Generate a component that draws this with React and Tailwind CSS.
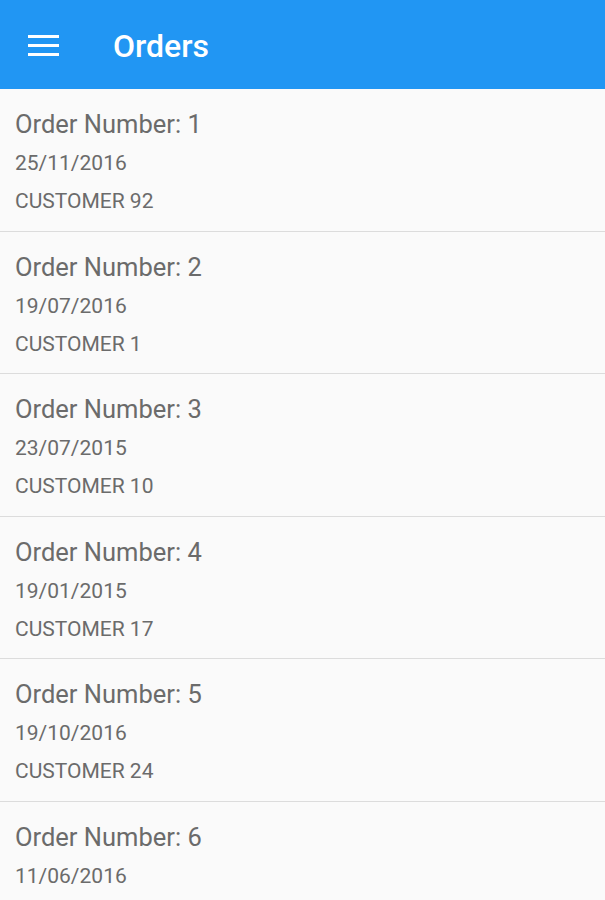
import React from "react";

const orders = [
  { n: 1, date: "25/11/2016", customer: "CUSTOMER 92" },
  { n: 2, date: "19/07/2016", customer: "CUSTOMER 1" },
  { n: 3, date: "23/07/2015", customer: "CUSTOMER 10" },
  { n: 4, date: "19/01/2015", customer: "CUSTOMER 17" },
  { n: 5, date: "19/10/2016", customer: "CUSTOMER 24" },
  { n: 6, date: "11/06/2016", customer: "CUSTOMER 31" },
];

export default function App() {
  return (
    <div className="w-[605px] h-[900px] overflow-hidden bg-[#fafafa]" style={{ fontFamily: "Roboto, 'Noto Sans', sans-serif" }}>
      <header className="h-[89px] bg-[#2196f3] flex items-center">
        <div className="w-[113px] pl-[28px] flex items-center">
          <svg width="31" height="22" viewBox="0 0 31 22">
            <rect x="0" y="1" width="31" height="3" fill="#fff" />
            <rect x="0" y="10" width="31" height="3" fill="#fff" />
            <rect x="0" y="19" width="31" height="3" fill="#fff" />
          </svg>
        </div>
        <h1 className="text-white text-[32px] font-medium leading-none mt-[2px]">Orders</h1>
      </header>
      <div>
        {orders.map((o) => (
          <div key={o.n} className="h-[142.5px] border-b border-[#dcdcdc] pl-[15px] pt-[19px] text-[#6b6b6b]">
            <div className="text-[25.5px] leading-[32px]">Order Number: {o.n}</div>
            <div className="text-[21px] leading-[24px] mt-[11px]">{o.date}</div>
            <div className="text-[21px] leading-[24px] mt-[14px]">{o.customer}</div>
          </div>
        ))}
      </div>
    </div>
  );
}
